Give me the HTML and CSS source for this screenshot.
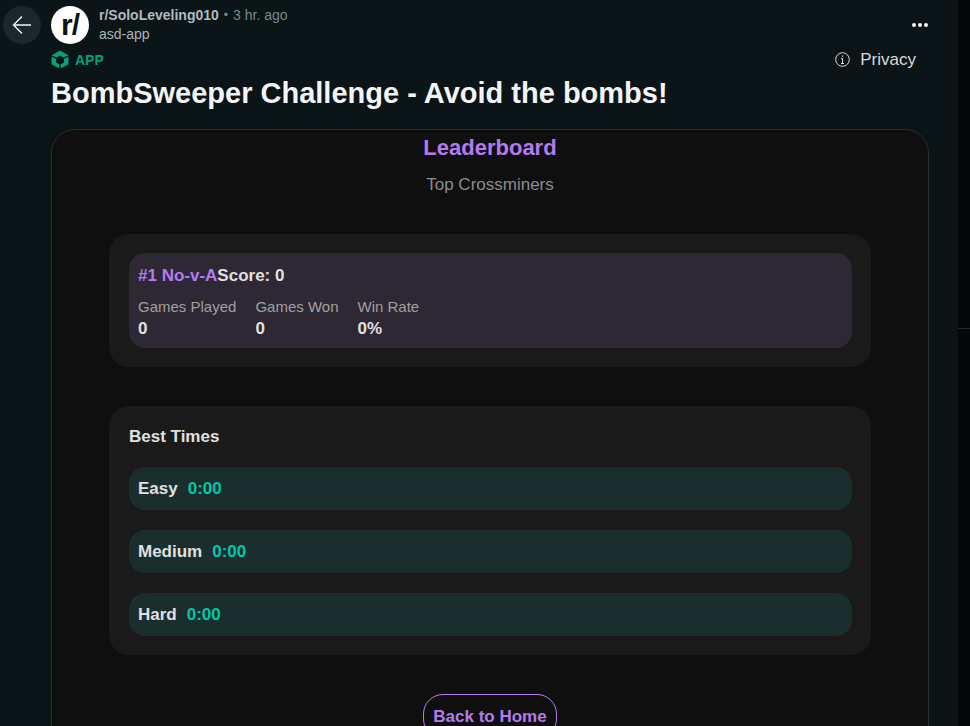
FILE: index.html
```html
<!DOCTYPE html>
<html lang="en">
<head>
<meta charset="UTF-8">
<meta name="viewport" content="width=device-width, initial-scale=1.0">
<title>BombSweeper Challenge</title>
<link rel="stylesheet" href="styles.css">
</head>
<body>

<div class="page">
    <main class="post">
        <header class="post-head">
            <button class="back-btn" aria-label="Back">
                <svg width="20" height="20" viewBox="0 0 20 20" fill="none" stroke="#f2f4f5" stroke-width="1.4">
                    <path d="M19 10H2M10 1.5L1.5 10l8.5 8.5"/>
                </svg>
            </button>
            <div class="avatar">
                <span class="avatar-text">r/</span>
            </div>
            <div class="meta">
                <div class="meta-top"><b>r/SoloLeveling010</b><span class="dot">•</span><span>3 hr. ago</span></div>
                <div class="meta-user">asd-app</div>
            </div>
            <div class="more">
                <i></i><i></i><i></i>
            </div>
        </header>

        <div class="app-row">
            <div class="app-tag">
                <svg width="18" height="19" viewBox="0 0 18 19" fill="#01a27d">
                    <path d="M9 0.5L17.5 5.2L12.6 7.6L9 5.8L5.4 7.6L0.5 5.2Z"/>
                    <path d="M0.5 6.6L5 8.9V12.6L8.2 14.3V18.4L0.5 14.2Z"/>
                    <path d="M17.5 6.6L13 8.9V12.6L9.8 14.3V18.4L17.5 14.2Z"/>
                </svg>
                <span>APP</span>
            </div>
            <div class="privacy">
                <svg width="15" height="15" viewBox="0 0 15 15" fill="none" stroke="#d7dadc" stroke-width="1">
                    <circle cx="7.5" cy="7.5" r="6.8"/>
                    <path d="M7.5 6.5V11.5M6 6.5H7.5M6 11.5H9"/>
                    <path d="M7.5 3.4V4.8" stroke-width="1.3"/>
                </svg>
                <span>Privacy</span>
            </div>
        </div>

        <h1 class="post-title">BombSweeper Challenge - Avoid the bombs!</h1>

        <section class="game-card">
            <h2 class="board-title">Leaderboard</h2>
            <p class="board-sub">Top Crossminers</p>

            <div class="panel panel-players">
                <div class="player">
                    <div class="player-head"><span class="player-name">#1 No-v-A</span><span>Score: 0</span></div>
                    <div class="stats">
                        <div class="stat">
                            <span class="stat-label">Games Played</span>
                            <span class="stat-value">0</span>
                        </div>
                        <div class="stat">
                            <span class="stat-label">Games Won</span>
                            <span class="stat-value">0</span>
                        </div>
                        <div class="stat">
                            <span class="stat-label">Win Rate</span>
                            <span class="stat-value">0%</span>
                        </div>
                    </div>
                </div>
            </div>

            <div class="panel panel-times">
                <h3 class="times-title">Best Times</h3>
                <div class="time-row"><span>Easy</span><span class="time-value">0:00</span></div>
                <div class="time-row"><span>Medium</span><span class="time-value">0:00</span></div>
                <div class="time-row"><span>Hard</span><span class="time-value">0:00</span></div>
            </div>

            <div class="back-wrap">
                <button class="home-btn">Back to Home</button>
            </div>
        </section>
    </main>

    <aside class="side-strip">
        <div class="side-line"></div>
    </aside>
</div>

</body>
</html>
```

FILE: styles.css
```css
html, body {
    height: 100%;
}
body {
    font-family: "Liberation Sans", Arial, sans-serif;
    margin: 0;
    padding: 0;
    background-color: #0b1416;
    overflow: hidden;
}
.page {
    display: flex;
    height: 726px;
    overflow: hidden;
}
.post {
    flex: 1;
    min-width: 0;
    box-sizing: border-box;
    padding: 5px 29px 0 3px;
}
.side-strip {
    width: 12px;
    flex: none;
    padding-top: 328px;
    box-sizing: border-box;
    background-color: #040809;
}
.side-line {
    height: 1px;
    background-color: #24282a;
}

/* post header */
.post-head {
    display: flex;
    align-items: center;
    height: 39px;
}
.back-btn {
    width: 38px;
    height: 38px;
    flex: none;
    display: flex;
    align-items: center;
    justify-content: center;
    padding: 0;
    border: none;
    border-radius: 50%;
    background-color: #1a282d;
}
.avatar {
    width: 38px;
    height: 38px;
    flex: none;
    margin-left: 10px;
    display: flex;
    align-items: center;
    justify-content: center;
    border-radius: 50%;
    background-color: #fff;
}
.avatar-text {
    font-size: 30px;
    font-weight: 700;
    color: #0b1416;
    letter-spacing: -1px;
    line-height: 1;
}
.meta {
    flex: 1;
    margin-left: 10px;
    font-size: 14px;
    color: #8ba2ad;
}
.meta-top {
    display: flex;
    align-items: center;
    line-height: 19px;
    color: #76898f;
}
.meta-top b {
    color: #b0babf;
}
.dot {
    margin: 0 5px;
    font-size: 12px;
}
.meta-user {
    color: #aab6bb;
    line-height: 19px;
}
.more {
    display: flex;
    gap: 2px;
    margin-right: 1px;
}
.more i {
    width: 4px;
    height: 4px;
    border-radius: 50%;
    background-color: #f2f4f5;
}

/* app tag row */
.app-row {
    display: flex;
    align-items: center;
    justify-content: space-between;
    margin-left: 48px;
    height: 27px;
    padding-top: 4px;
    box-sizing: border-box;
}
.app-tag {
    display: flex;
    align-items: center;
    gap: 6px;
    font-size: 14px;
    font-weight: 700;
    color: #01a27d;
}
.privacy {
    display: flex;
    align-items: center;
    gap: 10px;
    margin-right: 13px;
    font-size: 17px;
    color: #d7dadc;
}
.post-title {
    margin: 2px 0 0 48px;
    font-size: 29px;
    font-weight: 700;
    line-height: 40px;
    color: #f2f4f5;
}

/* game card */
.game-card {
    margin: 16px 0 0 48px;
    height: 640px;
    box-sizing: border-box;
    padding: 0 57px;
    background-color: #0f0f0f;
    border: 1px solid #2a2d2e;
    border-radius: 24px;
    text-align: center;
}
.board-title {
    margin: 4px 0 0;
    font-size: 22px;
    line-height: 27px;
    color: #b57bee;
}
.board-sub {
    margin: 14px 0 0;
    font-size: 17px;
    line-height: 20px;
    color: #8c8c8c;
}
.panel {
    background-color: #1a1a1a;
    border-radius: 20px;
    padding: 19px 19px 19px 20px;
    text-align: left;
}
.panel-players {
    margin-top: 39px;
}
.panel-times {
    margin-top: 39px;
}
.player {
    padding: 13px 9px 9px;
    background-color: #2d2833;
    border-radius: 16px;
}
.player-head {
    font-size: 17px;
    font-weight: 700;
    line-height: 20px;
    color: #e0e0e0;
}
.player-name {
    color: #b57bee;
}
.stats {
    display: flex;
    gap: 19px;
    margin-top: 11px;
}
.stat {
    display: flex;
    flex-direction: column;
}
.stat-label {
    font-size: 15px;
    line-height: 20px;
    color: #a0a0a0;
}
.stat-value {
    margin-top: 2px;
    font-size: 17px;
    font-weight: 700;
    line-height: 20px;
    color: #e0e0e0;
}
.times-title {
    margin: 2px 0 0;
    font-size: 17px;
    font-weight: 700;
    line-height: 20px;
    color: #e0e0e0;
}
.time-row {
    display: flex;
    align-items: center;
    gap: 10px;
    height: 43px;
    margin-top: 20px;
    padding: 0 9px;
    background-color: #1a2e2e;
    border-radius: 16px;
    font-size: 17px;
    font-weight: 700;
    color: #e0e0e0;
}
.time-row + .time-row {
    margin-top: 20px;
}
.time-value {
    color: #00c9a7;
}
.back-wrap {
    margin-top: 39px;
    display: flex;
    justify-content: center;
}
.home-btn {
    padding: 10px 9px;
    font-family: inherit;
    font-size: 17px;
    font-weight: 700;
    line-height: 23px;
    color: #b57bee;
    background: none;
    border: 1px solid #b57bee;
    border-radius: 20px;
}
```
